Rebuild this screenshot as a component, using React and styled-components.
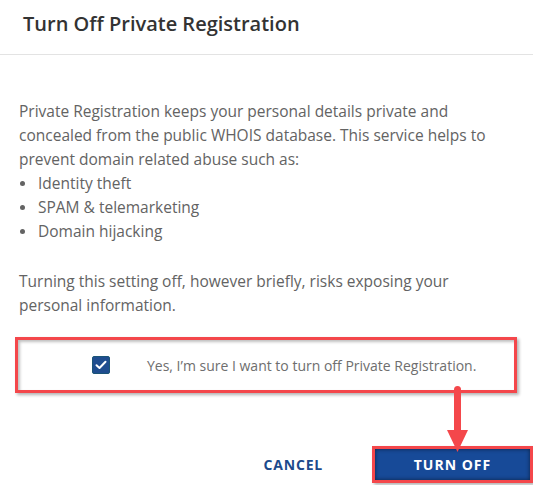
import styled, { createGlobalStyle } from "styled-components";
import { useState } from "react";

const GlobalStyle = createGlobalStyle`
    body {
        margin: 0;
        background: #ffffff;
        font-family: "Open Sans", "Noto Sans", sans-serif;
    }
`;

const Dialog = styled.div`
    position: relative;
    width: 533px;
    height: 485px;
    background: #ffffff;
    overflow: hidden;
`;

const Header = styled.div`
    height: 55px;
    padding: 11px 23px 0;
    box-sizing: border-box;
    border-bottom: 1px solid #e3e3e3;
`;

const Title = styled.h2`
    margin: 0;
    font-size: 20px;
    line-height: 26px;
    font-weight: 600;
    color: #333333;
`;

const Body = styled.div`
    padding: 44px 19px 0;
`;

const Text = styled.p`
    margin: ${(p) => (p.$spaced ? "26px 0 0" : "0")};
    font-size: 15.5px;
    line-height: 24px;
    color: #636363;
`;

const List = styled.ul`
    margin: 0;
    padding: 0;
    list-style: none;
`;

const Item = styled.li`
    display: flex;
    align-items: center;
    font-size: 15.5px;
    line-height: 24px;
    color: #636363;

    &::before {
        content: "";
        width: 5px;
        height: 5px;
        border-radius: 50%;
        background: #636363;
        margin: 1px 13px 0 1px;
    }
`;

const ConfirmRow = styled.label`
    display: flex;
    align-items: center;
    gap: 37px;
    box-sizing: border-box;
    width: 502px;
    height: 56px;
    margin: 20px 0 0 -4px;
    padding-left: 74px;
    border: 3px solid #f4474b;
    box-shadow: 2px 2px 3px rgba(0, 0, 0, 0.3), inset 2px 2px 3px rgba(0, 0, 0, 0.25);
    cursor: pointer;
`;

const CheckBox = styled.span`
    display: flex;
    align-items: center;
    justify-content: center;
    width: 18px;
    height: 18px;
    box-sizing: border-box;
    border-radius: 2px;
    border: 1px solid #1b5577;
    background: ${(p) => (p.$checked ? "#1f4d8f" : "#ffffff")};
`;

const Label = styled.span`
    font-size: 14px;
    color: #6e6e6e;
`;

const Footer = styled.div`
    display: flex;
    justify-content: flex-end;
    align-items: center;
    gap: 49px;
    margin: 53px -19px 0 0;
`;

const TextButton = styled.button`
    border: 0;
    background: none;
    padding: 0;
    font-family: inherit;
    font-size: 14px;
    font-weight: 700;
    letter-spacing: 0.8px;
    color: #1c4a8c;
    cursor: pointer;
`;

const Highlight = styled.div`
    border: 3px solid #f4474b;
    box-shadow: 2px 2px 3px rgba(0, 0, 0, 0.3);
`;

const PrimaryButton = styled.button`
    display: block;
    width: 155px;
    height: 31px;
    border: 0;
    background: #174a98;
    box-shadow: inset 0 0 4px rgba(0, 0, 0, 0.55);
    font-family: inherit;
    font-size: 14px;
    font-weight: 700;
    letter-spacing: 1px;
    color: #ffffff;
    cursor: pointer;
`;

const Arrow = styled.svg`
    position: absolute;
    left: 447px;
    top: 386px;
`;

export default function App() {
    const [checked, setChecked] = useState(true);

    return (
        <>
            <GlobalStyle />
            <Dialog>
                <Header>
                    <Title>Turn Off Private Registration</Title>
                </Header>
                <Body>
                    <Text>
                        Private Registration keeps your personal details private and concealed from the public WHOIS
                        database. This service helps to prevent domain related abuse such as:
                    </Text>
                    <List>
                        <Item>Identity theft</Item>
                        <Item>SPAM &amp; telemarketing</Item>
                        <Item>Domain hijacking</Item>
                    </List>
                    <Text $spaced>
                        Turning this setting off, however briefly, risks exposing your personal information.
                    </Text>
                    <ConfirmRow onClick={() => setChecked(!checked)}>
                        <CheckBox $checked={checked}>
                            {checked && (
                                <svg width="12" height="10" viewBox="0 0 12 10">
                                    <path d="M1.5 5.2 L4.5 8 L10.5 1.8" fill="none" stroke="#ffffff" strokeWidth="2"
                                          strokeLinecap="round" strokeLinejoin="round"/>
                                </svg>
                            )}
                        </CheckBox>
                        <Label>Yes, I’m sure I want to turn off Private Registration.</Label>
                    </ConfirmRow>
                    <Footer>
                        <TextButton>CANCEL</TextButton>
                        <Highlight>
                            <PrimaryButton>TURN OFF</PrimaryButton>
                        </Highlight>
                    </Footer>
                </Body>
                <Arrow width="22" height="68" viewBox="0 0 22 68">
                    <rect x="7" y="0" width="7" height="48" rx="3.5" fill="#f4474b"/>
                    <polygon points="0,44 21,44 10.5,66" fill="#f4474b"/>
                </Arrow>
            </Dialog>
        </>
    );
}
